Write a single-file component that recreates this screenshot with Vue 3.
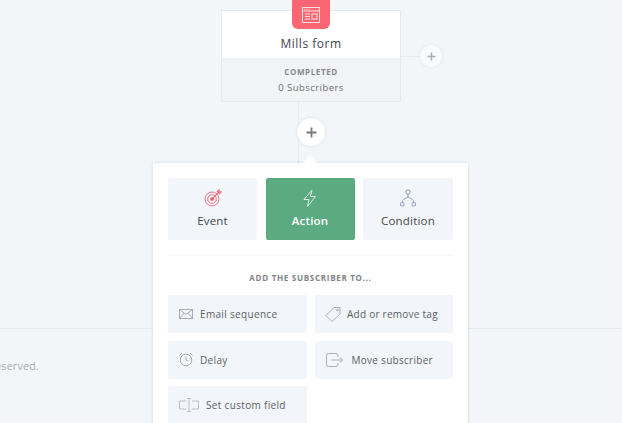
<script setup>
const tabs = [
  { name: 'Event', key: 'event' },
  { name: 'Action', key: 'action', active: true },
  { name: 'Condition', key: 'condition' }
]
const actions = [
  { name: 'Email sequence', key: 'mail' },
  { name: 'Add or remove tag', key: 'tag' },
  { name: 'Delay', key: 'clock' },
  { name: 'Move subscriber', key: 'move' },
  { name: 'Set custom field', key: 'field' }
]
</script>

<template>
  <div class="canvas">
    <div class="footer"><span class="legal">All rights reserved.</span></div>
    <span class="trunk"></span>

    <div class="node">
      <div class="badge">
        <svg width="20" height="18" viewBox="0 0 20 18" fill="none" stroke="#fff" stroke-width="1" opacity=".8">
          <rect x="1.500" y="1.500" width="17" height="15" />
          <path d="M1.500 5h17M3.500 3.300h1M5.500 3.300h1M7.500 3.300h1M4 8h5M4 10.500h5M4 13h5" />
          <rect x="11" y="8" width="5" height="5" />
        </svg>
      </div>
      <div class="node-title">Mills form</div>
      <div class="node-stats">
        <div class="stat-label">COMPLETED</div>
        <div class="stat-count">0 Subscribers</div>
      </div>
      <span class="branch"></span>
      <span class="side-plus">
        <svg width="9" height="9" viewBox="0 0 9 9"><path d="M4.500.5v8M.5 4.500h8" stroke="#a9adb2" stroke-width="1.500" /></svg>
      </span>
    </div>

    <button class="add">
      <svg width="11" height="11" viewBox="0 0 11 11"><path d="M5.500.5v10M.5 5.500h10" stroke="#75797e" stroke-width="1.800" /></svg>
    </button>

    <div class="panel">
      <span class="arrow"></span>
      <div class="tabs">
        <div v-for="t in tabs" :key="t.key" class="tab" :class="{ active: t.active }">
          <svg v-if="t.key === 'event'" width="18" height="18" viewBox="0 0 18 18" fill="none" stroke="#ee6a76" stroke-width=".9">
            <circle cx="8" cy="10" r="7" />
            <circle cx="8" cy="10" r="4.300" />
            <circle cx="8" cy="10" r="1.500" fill="#ee6a76" />
            <path d="M8 10l7-7M13 3l2-2 .4 1.600L17 3l-2 2" stroke-width="1.100" />
          </svg>
          <svg v-else-if="t.key === 'action'" width="18" height="18" viewBox="0 0 18 18" fill="none" stroke="#fff" stroke-width=".9" opacity=".9">
            <path d="M11 1L3 10.500h5L6.500 17.500 14.500 7.500h-5z" stroke-linejoin="round" />
          </svg>
          <svg v-else width="18" height="18" viewBox="0 0 18 18" fill="none" stroke="#8491ad" stroke-width=".9">
            <circle cx="9" cy="3" r="2.200" />
            <rect x="1.500" y="13.500" width="3.500" height="3.500" rx="1" />
            <rect x="13" y="13.500" width="3.500" height="3.500" rx="1" />
            <path d="M9 5.200v2.800M3.200 13.500C3.200 10.500 6 9.500 9 8c3 1.500 5.800 2.500 5.800 5.500" />
          </svg>
          <span class="tab-name">{{ t.name }}</span>
        </div>
      </div>
      <div class="rule"></div>
      <div class="heading">ADD THE SUBSCRIBER TO...</div>
      <div class="actions">
        <div v-for="a in actions" :key="a.key" class="item" :class="'item-' + a.key">
          <svg v-if="a.key === 'mail'" width="14" height="10" viewBox="0 0 14 10" fill="none" stroke="#a4a9ae" stroke-width=".9">
            <rect x=".5" y=".5" width="13" height="9" />
            <path d="M.5.500l6.500 5 6.500-5M.5 9.500l4.500-5.500M13.500 9.500L9 4" />
          </svg>
          <svg v-else-if="a.key === 'tag'" width="16" height="16" viewBox="0 0 16 16" fill="none" stroke="#a4a9ae" stroke-width=".9">
            <path d="M1 9.500L9 1.500h6V8l-8 7.500z" />
            <circle cx="12.500" cy="4" r="1" />
          </svg>
          <svg v-else-if="a.key === 'clock'" width="14" height="15" viewBox="0 0 14 15" fill="none" stroke="#a4a9ae" stroke-width=".9">
            <circle cx="7" cy="8" r="5.800" />
            <path d="M7 4.500V8l2 1M.5 3.500L3 1M13.500 3.500L11 1" />
          </svg>
          <svg v-else-if="a.key === 'move'" width="17" height="14" viewBox="0 0 17 14" fill="none" stroke="#a4a9ae" stroke-width=".9">
            <path d="M12 4V2.500a2 2 0 0 0-2-2H2.500a2 2 0 0 0-2 2v9a2 2 0 0 0 2 2H10a2 2 0 0 0 2-2V10" />
            <path d="M5.500 7h11M14 4.500L16.500 7 14 9.500" />
          </svg>
          <svg v-else width="20" height="14" viewBox="0 0 20 14" fill="none" stroke="#b4b8bd" stroke-width=".9">
            <path d="M7 3H.5v8H7M13 3h6.500v8H13M8 .5h4M8 13.500h4M10 .5v13" />
          </svg>
          <span>{{ a.name }}</span>
        </div>
      </div>
    </div>
  </div>
</template>

<style scoped>
.canvas {
  position: relative;
  width: 622px;
  height: 423px;
  overflow: hidden;
  background: #f3f6f9;
  display: flex;
  flex-direction: column;
  align-items: center;
  font-family: "Open Sans", "Noto Sans", sans-serif;
  color: #44494f;
}
.footer {
  position: absolute;
  left: 0;
  right: 0;
  top: 328px;
  border-top: 1px solid #e6e9ee;
}
.legal {
  position: absolute;
  right: 583px;
  top: 30px;
  white-space: nowrap;
  font-size: 10.5px;
  letter-spacing: .3px;
  color: #a8acb1;
}
.trunk {
  position: absolute;
  left: 298px;
  top: 102px;
  width: 1px;
  height: 61px;
  background: #e6e9ee;
}
.node {
  position: relative;
  flex: none;
  margin-top: 10px;
  width: 180px;
  height: 92px;
  box-sizing: border-box;
  background: #fff;
  border: 1px solid #e6e9ee;
  display: flex;
  flex-direction: column;
  align-items: center;
}
.badge {
  position: absolute;
  top: -11px;
  left: 70px;
  width: 38px;
  height: 29px;
  background: #fb6672;
  border-radius: 0 0 6px 6px;
  display: flex;
  align-items: center;
  justify-content: center;
}
.node-title {
  margin-top: 23px;
  height: 24px;
  font-size: 12px;
  line-height: 19px;
  letter-spacing: .5px;
  color: #3f444a;
}
.node-stats {
  align-self: stretch;
  flex: 1;
  background: #f2f3f5;
  text-align: center;
}
.stat-label {
  margin-top: 7px;
  font-size: 8px;
  line-height: 13px;
  font-weight: 700;
  letter-spacing: .6px;
  color: #85898e;
}
.stat-count {
  margin-top: 3px;
  font-size: 9.5px;
  line-height: 14px;
  letter-spacing: .45px;
  color: #6b7076;
}
.branch {
  position: absolute;
  left: 179px;
  top: 45px;
  width: 21px;
  height: 1px;
  background: #e6e9ee;
}
.side-plus {
  position: absolute;
  left: 198px;
  top: 34px;
  width: 22px;
  height: 22px;
  border-radius: 50%;
  background: #f9fafc;
  box-shadow: 0 0 3px rgba(130, 140, 160, .2);
  display: flex;
  align-items: center;
  justify-content: center;
}
.add {
  position: relative;
  flex: none;
  margin-top: 16px;
  width: 28px;
  height: 28px;
  padding: 0;
  border: 0;
  border-radius: 50%;
  background: #fff;
  box-shadow: 0 0 3px rgba(130, 140, 160, .25);
  display: flex;
  align-items: center;
  justify-content: center;
}
.panel {
  position: relative;
  flex: none;
  margin: 17px 1px 0 0;
  width: 315px;
  box-sizing: border-box;
  padding: 15px;
  background: #fff;
  box-shadow: 0 0 3px rgba(130, 140, 160, .3);
}
.arrow {
  position: absolute;
  left: 152px;
  top: -5px;
  width: 10px;
  height: 10px;
  background: #fff;
  transform: rotate(45deg);
}
.tabs {
  display: grid;
  grid-template-columns: 89px 89px 90px;
  column-gap: 8.5px;
}
.tab {
  height: 62px;
  box-sizing: border-box;
  padding-top: 11px;
  border-radius: 2px;
  background: #f2f5f9;
  display: flex;
  flex-direction: column;
  align-items: center;
}
.tab.active {
  background: #5cab80;
  color: #fff;
}
.tab.active .tab-name {
  font-weight: 600;
}
.tab-name {
  margin-top: 5px;
  font-size: 11.5px;
  line-height: 18px;
  letter-spacing: .2px;
}
.rule {
  margin: 15px 0 0;
  border-top: 1px solid #f7f8fa;
}
.heading {
  margin-top: 15px;
  font-size: 8px;
  line-height: 13px;
  font-weight: 700;
  letter-spacing: .72px;
  text-align: center;
  color: #7f8388;
}
.actions {
  margin-top: 11px;
  display: grid;
  grid-template-columns: 139px 138.5px;
  justify-content: space-between;
  row-gap: 7.5px;
}
.item {
  height: 38px;
  box-sizing: border-box;
  padding-left: 11px;
  border-radius: 2px;
  background: #f2f5f9;
  display: flex;
  align-items: center;
  gap: 7px;
  font-size: 10px;
  letter-spacing: .33px;
  color: #5c6167;
}
.item-tag {
  padding-left: 10px;
  gap: 6.5px;
  letter-spacing: .25px;
}
.item-move { gap: 9px; letter-spacing: .28px; }
</style>
